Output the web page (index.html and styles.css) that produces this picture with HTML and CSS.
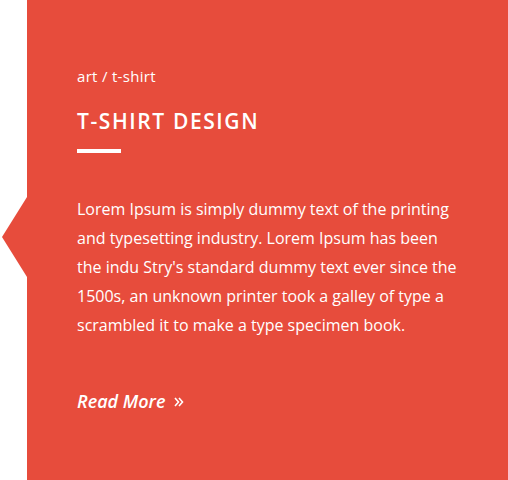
FILE: index.html
```html
<!DOCTYPE html>
<html>
<head>
<meta charset="utf-8">
<link rel="stylesheet" href="styles.css">
</head>
<body>
<div class="card">
  <span class="card-arrow"></span>
  <div class="card-meta">art / t-shirt</div>
  <h2 class="card-title">T-SHIRT DESIGN</h2>
  <div class="card-rule"></div>
  <p class="card-text">Lorem Ipsum is simply dummy text of the printing and typesetting industry. Lorem Ipsum has been the indu Stry's standard dummy text ever since the 1500s, an unknown printer took a galley of type a scrambled it to make a type specimen book.</p>
  <a class="card-more" href="#">Read More <svg class="card-more-icon" width="10" height="10" viewBox="0 0 10 10"><path d="M1 1 L4.5 5 L1 9 M5 1 L8.5 5 L5 9" fill="none" stroke="#ffffff" stroke-width="1.6"/></svg></a>
</div>
</body>
</html>
```
FILE: styles.css
```css
html, body {
  margin: 0;
  padding: 0;
  background: #ffffff;
}
body {
  font-family: "Open Sans", "Liberation Sans", sans-serif;
  color: #ffffff;
}
.card {
  position: relative;
  margin-left: 27px;
  height: 480px;
  box-sizing: border-box;
  background: #e74c3c;
  padding: 66px 50px 0 50px;
  display: flex;
  flex-direction: column;
  align-items: flex-start;
}
.card-arrow {
  position: absolute;
  left: -25px;
  top: 197px;
  width: 0;
  height: 0;
  border-top: 40px solid transparent;
  border-bottom: 40px solid transparent;
  border-right: 25px solid #e74c3c;
}
.card-meta {
  font-size: 15px;
  line-height: 20px;
  letter-spacing: 0.3px;
}
.card-title {
  margin: 20px 0 0 0;
  font-size: 21px;
  font-weight: 600;
  letter-spacing: 1.6px;
  line-height: 30px;
}
.card-rule {
  margin-top: 13px;
  width: 44px;
  height: 4px;
  background: #ffffff;
}
.card-text {
  margin: 42px 0 0 0;
  font-size: 16px;
  line-height: 29px;
  width: 385px;
}
.card-more {
  margin-top: 48px;
  color: #ffffff;
  text-decoration: none;
  font-size: 18px;
  font-weight: 600;
  font-style: italic;
  line-height: 26px;
  display: flex;
  align-items: center;
}
.card-more-icon {
  margin-left: 9px;
  margin-top: 1px;
}
```
